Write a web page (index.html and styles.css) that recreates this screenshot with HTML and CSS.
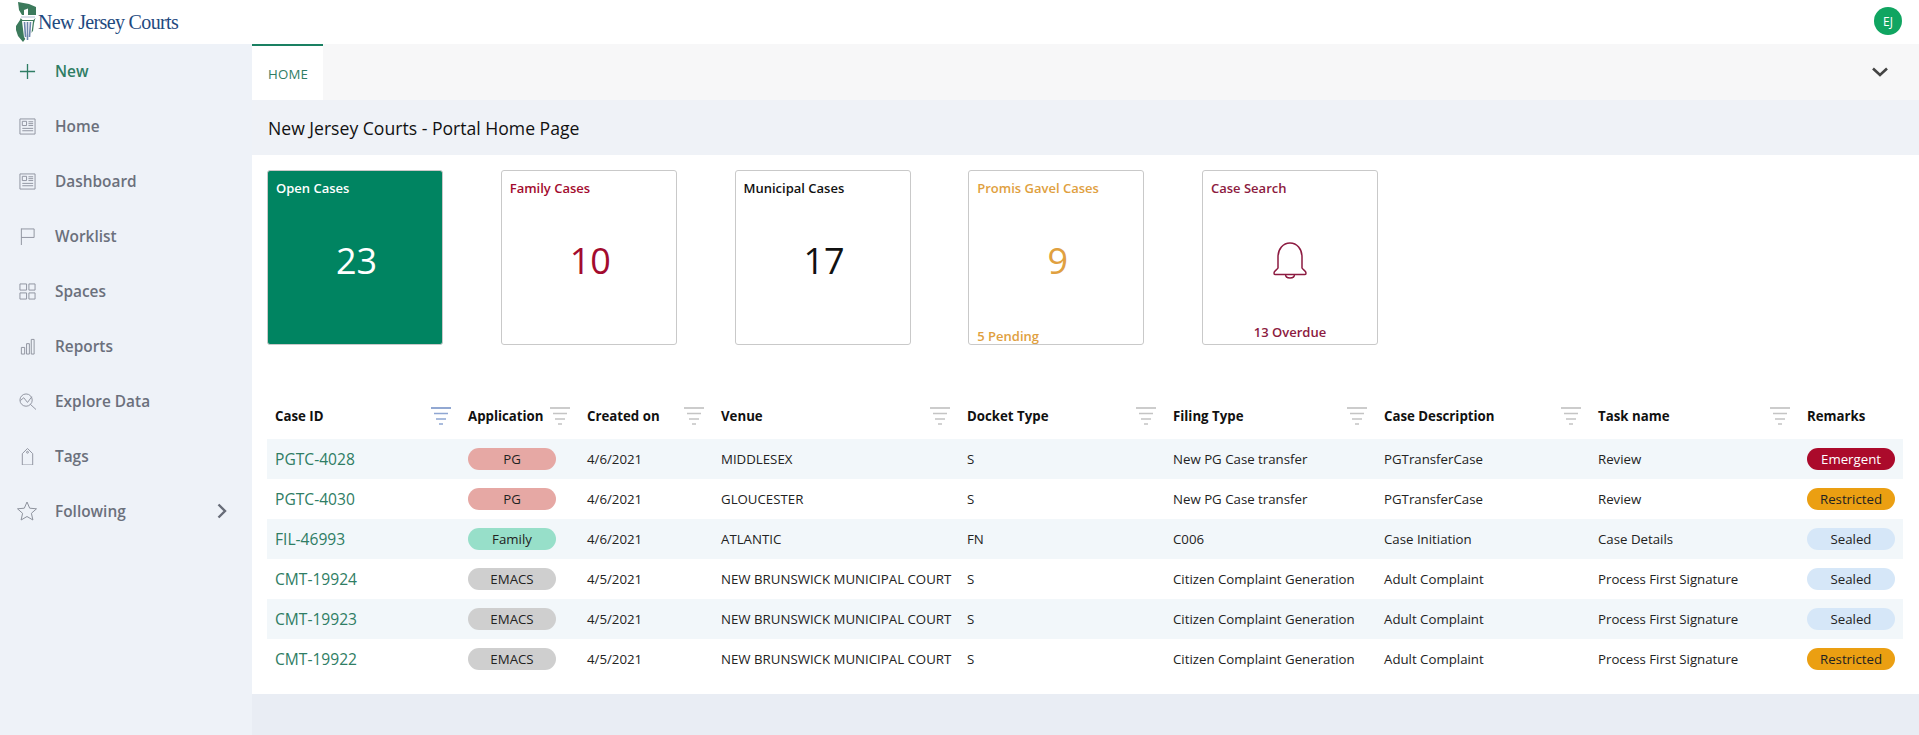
FILE: index.html
```html
<!DOCTYPE html>
<html lang="en">
<head>
    <meta charset="UTF-8">
    <title>New Jersey Courts - Portal Home Page</title>
    <link rel="stylesheet" href="styles.css">
</head>
<body>
    <header class="topbar">
        <div class="logo">
            <svg class="logo-mark" width="24" height="42" viewBox="0 0 24 42">
                <path d="M3 1 L14 3 L21 6 L21 15 L19 22 L18 30 L11 37 L8 41 L3 35 L1 29 L1 25 L5 19 L7 14 L4 9 Z" fill="#3c7a5c"/>
                <path d="M5 14 H21 V16.500 L18.500 19 H7.500 L5 16.500 Z" fill="#fff"/>
                <path d="M6 16 H20" stroke="#9fb0c8" stroke-width="0.800"/>
                <path d="M7 20 H18 L16 36 L12.500 41 L9 36 Z" fill="#fff"/>
                <path d="M9.500 21 L10.500 36 M12.500 21 V39 M15.500 21 L14.500 36" stroke="#6f86ad" stroke-width="1.600" fill="none"/>
                <path d="M9 9 L13 7.500 V14 H9 Z" fill="#fff"/>
            </svg>
            <span class="logo-text">New Jersey Courts</span>
        </div>
        <div class="avatar">EJ</div>
    </header>
    <div class="layout">
        <nav class="sidebar">
            <a class="nav-item nav-new">
                <svg class="nav-icon" viewBox="0 0 18 18"><path d="M9 1 V17 M1 9 H17" stroke="#2f7d64" stroke-width="1.400" fill="none"/></svg>
                <span>New</span>
            </a>
            <a class="nav-item">
                <svg class="nav-icon" viewBox="0 0 18 18"><path d="M1 1 H17 V17 H1 Z M3.500 3.500 H8 V8 H3.500 Z M10 4 H15 M10 6 H15 M10 8 H15 M3.500 11 H15 M3.500 13.500 H15" stroke="#8d929d" fill="none"/></svg>
                <span>Home</span>
            </a>
            <a class="nav-item">
                <svg class="nav-icon" viewBox="0 0 18 18"><path d="M1 1 H17 V17 H1 Z M3.500 3.500 H8 V8 H3.500 Z M10 4 H15 M10 6 H15 M10 8 H15 M3.500 11 H15 M3.500 13.500 H15" stroke="#8d929d" fill="none"/></svg>
                <span>Dashboard</span>
            </a>
            <a class="nav-item">
                <svg class="nav-icon" viewBox="0 0 18 18"><path d="M2.500 0.500 V18 M2.500 1 H16 V10 H2.500" stroke="#8d929d" fill="none"/></svg>
                <span>Worklist</span>
            </a>
            <a class="nav-item">
                <svg class="nav-icon" viewBox="0 0 18 18"><path d="M1 1 H8 V7.500 H1 Z M10.500 1 H17 V7.500 H10.500 Z M1 10.500 H8 V17 H1 Z M10.500 10.500 H17 V17 H10.500 Z" stroke="#8d929d" fill="none"/></svg>
                <span>Spaces</span>
            </a>
            <a class="nav-item">
                <svg class="nav-icon" viewBox="0 0 18 18"><path d="M2.500 10 H6 V17 H2.500 Z M8 6 H11 V17 H8 Z M13 1.500 H16 V17 H13 Z" stroke="#8d929d" fill="none"/></svg>
                <span>Reports</span>
            </a>
            <a class="nav-item">
                <svg class="nav-icon" viewBox="0 0 18 18"><circle cx="7.500" cy="7.500" r="6.500" stroke="#8d929d" fill="none"/><path d="M12 12 L18 17.500 M1.500 8 L5 5 L9 10 L13.500 4" stroke="#8d929d" fill="none"/></svg>
                <span>Explore Data</span>
            </a>
            <a class="nav-item">
                <svg class="nav-icon" viewBox="0 0 18 18"><path d="M3.500 6 L9 0.500 L14.500 6 V18 H3.500 Z" stroke="#8d929d" fill="none"/><circle cx="9" cy="4.500" r="1" stroke="#8d929d" fill="none"/></svg>
                <span>Tags</span>
            </a>
            <a class="nav-item">
                <svg class="nav-icon nav-star" viewBox="0 0 20 20"><path d="M10 1 L12.700 7.200 L19.500 7.800 L14.400 12.300 L15.900 19 L10 15.500 L4.100 19 L5.600 12.300 L0.500 7.800 L7.300 7.200 Z" stroke="#8d929d" fill="none"/></svg>
                <span>Following</span>
                <svg class="nav-arrow" width="10" height="16" viewBox="0 0 10 16"><path d="M1.500 1.500 L8 8 L1.500 14.500" stroke="#676c78" stroke-width="2.400" fill="none"/></svg>
            </a>
        </nav>
        <main class="main">
            <div class="tabbar">
                <div class="tab">HOME</div>
                <svg class="tab-toggle" width="16" height="10" viewBox="0 0 16 10"><path d="M1 1.500 L8 8 L15 1.500" stroke="#444" stroke-width="2.600" fill="none"/></svg>
            </div>
            <h1 class="page-title">New Jersey Courts - Portal Home Page</h1>
            <section class="content">
                <div class="cards">
                    <div class="card card-open">
                        <div class="card-title">Open Cases</div>
                        <div class="card-value">23</div>
                    </div>
                    <div class="card card-family">
                        <div class="card-title">Family Cases</div>
                        <div class="card-value">10</div>
                    </div>
                    <div class="card card-municipal">
                        <div class="card-title">Municipal Cases</div>
                        <div class="card-value">17</div>
                    </div>
                    <div class="card card-promis">
                        <div class="card-title">Promis Gavel Cases</div>
                        <div class="card-value">9</div>
                        <div class="card-foot">5 Pending</div>
                    </div>
                    <div class="card card-search">
                        <div class="card-title">Case Search</div>
                        <div class="card-value">
                            <svg class="bell" width="36" height="38" viewBox="0 0 36 38"><path d="M6 27 V16 C6 8 11 2 18 2 C25 2 30 8 30 16 V27 C31 29 34 30 34 32 C34 33 33.500 33.500 33 33.500 H3 C2.500 33.500 2 33 2 32 C2 30 5 29 6 27 Z M13.500 33.500 C13.500 36 15.500 37 18 37 C20.500 37 22.500 36 22.500 33.500" stroke="#8c1a40" stroke-width="1.500" fill="none"/></svg>
                        </div>
                        <div class="card-foot">13 Overdue</div>
                    </div>
                </div>
                <table class="cases">
                    <colgroup>
                        <col class="c-id"><col class="c-app"><col class="c-date"><col class="c-venue"><col class="c-docket"><col class="c-filing"><col class="c-desc"><col class="c-task"><col class="c-remarks">
                    </colgroup>
                    <thead>
                        <tr>
                            <th><div class="th-in">Case ID<svg class="filter filter-on" viewBox="0 0 20 18"><path d="M0 1 H20" stroke="#4a6fb5" stroke-width="1.200"/><path d="M3 6.500 H17 M5 12 H15 M8 17 H12" stroke="#8fa6d2" stroke-width="1.500"/></svg></div></th>
                            <th><div class="th-in">Application<svg class="filter" viewBox="0 0 20 18"><path d="M0 1 H20" stroke="#aaa" stroke-width="1.200"/><path d="M3 6.500 H17 M5 12 H15 M8 17 H12" stroke="#c4c4c4" stroke-width="1.500"/></svg></div></th>
                            <th><div class="th-in">Created on<svg class="filter" viewBox="0 0 20 18"><path d="M0 1 H20" stroke="#aaa" stroke-width="1.200"/><path d="M3 6.500 H17 M5 12 H15 M8 17 H12" stroke="#c4c4c4" stroke-width="1.500"/></svg></div></th>
                            <th><div class="th-in">Venue<svg class="filter" viewBox="0 0 20 18"><path d="M0 1 H20" stroke="#aaa" stroke-width="1.200"/><path d="M3 6.500 H17 M5 12 H15 M8 17 H12" stroke="#c4c4c4" stroke-width="1.500"/></svg></div></th>
                            <th><div class="th-in">Docket Type<svg class="filter" viewBox="0 0 20 18"><path d="M0 1 H20" stroke="#aaa" stroke-width="1.200"/><path d="M3 6.500 H17 M5 12 H15 M8 17 H12" stroke="#c4c4c4" stroke-width="1.500"/></svg></div></th>
                            <th><div class="th-in">Filing Type<svg class="filter" viewBox="0 0 20 18"><path d="M0 1 H20" stroke="#aaa" stroke-width="1.200"/><path d="M3 6.500 H17 M5 12 H15 M8 17 H12" stroke="#c4c4c4" stroke-width="1.500"/></svg></div></th>
                            <th><div class="th-in">Case Description<svg class="filter" viewBox="0 0 20 18"><path d="M0 1 H20" stroke="#aaa" stroke-width="1.200"/><path d="M3 6.500 H17 M5 12 H15 M8 17 H12" stroke="#c4c4c4" stroke-width="1.500"/></svg></div></th>
                            <th><div class="th-in">Task name<svg class="filter" viewBox="0 0 20 18"><path d="M0 1 H20" stroke="#aaa" stroke-width="1.200"/><path d="M3 6.500 H17 M5 12 H15 M8 17 H12" stroke="#c4c4c4" stroke-width="1.500"/></svg></div></th>
                            <th>Remarks</th>
                        </tr>
                    </thead>
                    <tbody>
                        <tr>
                            <td><a class="case-link">PGTC-4028</a></td>
                            <td><span class="pill pill-pg">PG</span></td>
                            <td>4/6/2021</td>
                            <td>MIDDLESEX</td>
                            <td>S</td>
                            <td>New PG Case transfer</td>
                            <td>PGTransferCase</td>
                            <td>Review</td>
                            <td><span class="pill pill-emergent">Emergent</span></td>
                        </tr>
                        <tr>
                            <td><a class="case-link">PGTC-4030</a></td>
                            <td><span class="pill pill-pg">PG</span></td>
                            <td>4/6/2021</td>
                            <td>GLOUCESTER</td>
                            <td>S</td>
                            <td>New PG Case transfer</td>
                            <td>PGTransferCase</td>
                            <td>Review</td>
                            <td><span class="pill pill-restricted">Restricted</span></td>
                        </tr>
                        <tr>
                            <td><a class="case-link">FIL-46993</a></td>
                            <td><span class="pill pill-family">Family</span></td>
                            <td>4/6/2021</td>
                            <td>ATLANTIC</td>
                            <td>FN</td>
                            <td>C006</td>
                            <td>Case Initiation</td>
                            <td>Case Details</td>
                            <td><span class="pill pill-sealed">Sealed</span></td>
                        </tr>
                        <tr>
                            <td><a class="case-link">CMT-19924</a></td>
                            <td><span class="pill pill-emacs">EMACS</span></td>
                            <td>4/5/2021</td>
                            <td>NEW BRUNSWICK MUNICIPAL COURT</td>
                            <td>S</td>
                            <td>Citizen Complaint Generation</td>
                            <td>Adult Complaint</td>
                            <td>Process First Signature</td>
                            <td><span class="pill pill-sealed">Sealed</span></td>
                        </tr>
                        <tr>
                            <td><a class="case-link">CMT-19923</a></td>
                            <td><span class="pill pill-emacs">EMACS</span></td>
                            <td>4/5/2021</td>
                            <td>NEW BRUNSWICK MUNICIPAL COURT</td>
                            <td>S</td>
                            <td>Citizen Complaint Generation</td>
                            <td>Adult Complaint</td>
                            <td>Process First Signature</td>
                            <td><span class="pill pill-sealed">Sealed</span></td>
                        </tr>
                        <tr>
                            <td><a class="case-link">CMT-19922</a></td>
                            <td><span class="pill pill-emacs">EMACS</span></td>
                            <td>4/5/2021</td>
                            <td>NEW BRUNSWICK MUNICIPAL COURT</td>
                            <td>S</td>
                            <td>Citizen Complaint Generation</td>
                            <td>Adult Complaint</td>
                            <td>Process First Signature</td>
                            <td><span class="pill pill-restricted">Restricted</span></td>
                        </tr>
                    </tbody>
                </table>
            </section>
        </main>
    </div>
</body>
</html>
```

FILE: styles.css
```css
* {
    box-sizing: border-box;
}
html, body {
    height: 100%;
}
body {
    margin: 0;
    font-family: "Open Sans", sans-serif;
    font-size: 13.25px;
    color: #222;
    background: #e9edf4;
    overflow: hidden;
}
.topbar {
    height: 44px;
    background: #fff;
    display: flex;
    justify-content: space-between;
    align-items: center;
    padding: 0 17px 0 15px;
}
.logo {
    display: flex;
    align-items: center;
}
.logo-mark {
    margin-right: -1px;
}
.logo-text {
    font-family: "Liberation Serif", serif;
    font-size: 20px;
    color: #1f4a80;
    letter-spacing: -0.65px;
}
.avatar {
    width: 28px;
    height: 28px;
    margin-bottom: 2px;
    border-radius: 50%;
    background: #10a561;
    color: #fff;
    font-size: 12px;
    display: flex;
    align-items: center;
    justify-content: center;
}
.layout {
    display: flex;
    height: calc(100% - 44px);
}
.sidebar {
    width: 252px;
    flex: none;
    background: #eef2f8;
}
.nav-item {
    height: 55px;
    padding: 0 0 1px 19px;
    display: flex;
    align-items: center;
    font-size: 15.4px;
    font-weight: 600;
    color: #6b707c;
}
.nav-icon {
    width: 17px;
    height: 17px;
    margin-right: 19px;
    flex: none;
}
.nav-star {
    width: 20px;
    height: 20px;
    margin-left: -2px;
    margin-right: 18px;
}
.nav-new {
    color: #2f7d64;
}
.nav-arrow {
    margin-left: auto;
    margin-right: 25px;
}
.main {
    flex: 1;
    min-width: 0;
}
.tabbar {
    height: 56px;
    background: #f7f7f8;
    display: flex;
    justify-content: space-between;
    align-items: center;
    padding-right: 31px;
}
.tab {
    width: 71px;
    height: 56px;
    background: #fff;
    border-top: 2px solid #1a8062;
    color: #2f7d64;
    letter-spacing: 0.2px;
    display: flex;
    align-items: center;
    justify-content: center;
    padding: 2px 0 0 1px;
}
.page-title {
    margin: 0;
    height: 55px;
    padding-left: 16px;
    display: flex;
    align-items: center;
    font-size: 17.6px;
    font-weight: 400;
    color: #111;
    background: #eff2f7;
}
.content {
    background: #fff;
    height: 539px;
    padding: 15px 16px 0 15px;
}
.cards {
    display: flex;
    gap: 57.75px;
}
.card {
    width: 176px;
    height: 175px;
    border: 1px solid #c9c9c9;
    border-radius: 3px;
    display: grid;
    grid-template-rows: 34px 1fr 34px;
    font-size: 13px;
    font-weight: 600;
}
.card-title {
    padding: 8px 0 0 8px;
    line-height: 18px;
}
.card-value {
    font-size: 36px;
    font-weight: 400;
    display: flex;
    align-items: center;
    justify-content: center;
    padding: 5px 0 0 3px;
}
.bell {
    margin-left: -3px;
}
.card-foot {
    align-self: end;
}
.card-open {
    background: #008461;
    color: #fff;
}
.card-family {
    color: #a30b2e;
}
.card-municipal {
    color: #111;
}
.card-promis {
    color: #e0a040;
}
.card-promis .card-foot {
    padding-left: 8px;
    line-height: 16px;
}
.card-search {
    color: #8c1a40;
}
.card-search .card-foot {
    text-align: center;
    padding-bottom: 3px;
}
.cases {
    width: 1636px;
    margin-top: 48px;
    border-collapse: collapse;
    table-layout: fixed;
}
.c-id { width: 193px; }
.c-app { width: 119px; }
.c-date { width: 134px; }
.c-venue { width: 246px; }
.c-docket { width: 206px; }
.c-filing { width: 211px; }
.c-desc { width: 214px; }
.c-task { width: 209px; }
.c-remarks { width: 104px; }
.cases th {
    height: 46px;
    padding: 0 9px 0 8px;
    text-align: left;
    font-weight: 700;
    color: #111;
}
.th-in {
    display: flex;
    justify-content: space-between;
    align-items: center;
}
.filter {
    width: 20px;
    height: 18px;
    flex: none;
    margin-top: -1px;
}
.filter-on {
    margin-top: 0;
}
.cases td {
    height: 40px;
    padding: 0 8px;
    white-space: nowrap;
    color: #222;
}
.cases tbody tr:nth-child(odd) {
    background: #f2f7fa;
}
.case-link {
    font-size: 15.6px;
    color: #2f7d64;
}
.pill {
    display: block;
    width: 88px;
    height: 22px;
    line-height: 22px;
    border-radius: 11px;
    text-align: center;
}
.pill-pg { background: #e6a8a4; }
.pill-family { background: #97dfc9; }
.pill-emacs { background: #cfcfcf; }
.pill-emergent { background: #ab0a2b; color: #fff; }
.pill-restricted { background: #eb9f12; }
.pill-sealed { background: #d6e7f8; }
```
